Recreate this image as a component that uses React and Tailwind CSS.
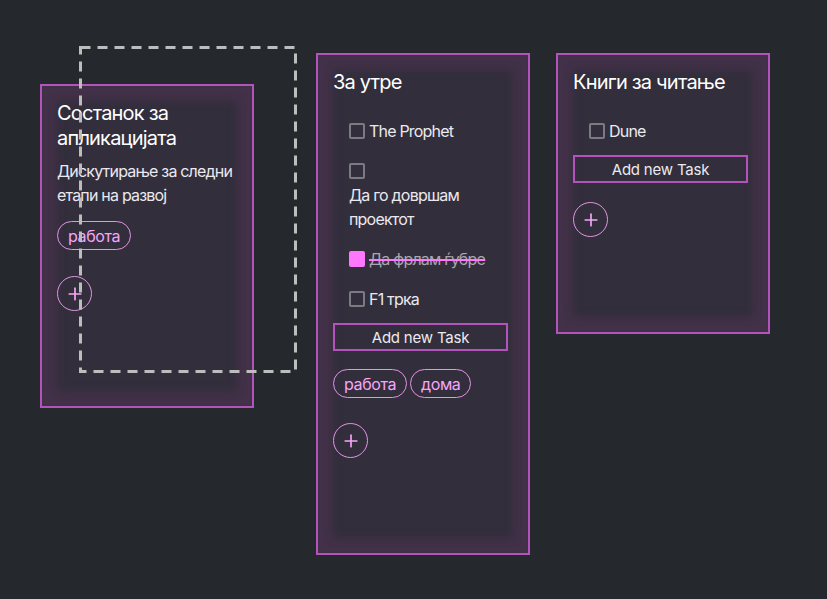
import { Plus } from 'lucide-react'

const BOARD = [
  {
    id: 'c2',
    title: 'За утре',
    tasks: [
      { text: 'The Prophet', done: false },
      { text: 'Да го довршам проектот', done: false },
      { text: 'Да фрлам ѓубре', done: true },
      { text: 'F1 трка', done: false },
    ],
    tags: ['работа', 'дома'],
  },
  {
    id: 'c3',
    title: 'Книги за читање',
    tasks: [{ text: 'Dune', done: false }],
    tags: [],
  },
]

const cardCls =
  'w-[214px] border-2 border-[#b553bd] bg-[#322e3c] px-[15px] pt-[15px] pb-[95px] shadow-[inset_0_0_8px_15px_#423148]'

function Checkbox({ done }) {
  if (done) return <span className="inline-block h-4 w-4 shrink-0 rounded-[2px] bg-[#ff77ff]" />
  return <span className="inline-block h-4 w-4 shrink-0 rounded-[2px] border-2 border-[#7d7b82]" />
}

function Task({ task }) {
  return (
    <li className="flex flex-wrap items-center gap-x-1 py-2 text-[16px] leading-6 tracking-[-0.8px]">
      <span className="flex h-6 items-center"><Checkbox done={task.done} /></span>
      <span
        className={
          task.done
            ? 'text-[#a9a6b0] line-through decoration-[#ff77ff] decoration-[1.5px]'
            : 'text-[#ebe9ee]'
        }
      >
        {task.text}
      </span>
    </li>
  )
}

function Tag({ label }) {
  return (
    <span className="inline-flex h-[29px] items-center rounded-full border border-[#e394e3] px-[10px] text-[16px] tracking-[-0.4px] text-[#f7a6f7]">
      {label}
    </span>
  )
}

function AddCircle({ className = '' }) {
  return (
    <button className={`flex h-[35px] w-[35px] items-center justify-center rounded-full border border-[#e394e3] text-[#f7a6f7] ${className}`}>
      <Plus size={20} strokeWidth={2} />
    </button>
  )
}

function Column({ col }) {
  return (
    <div className={`${cardCls} mt-[53px]`}>
      <h3 className="text-[20px] leading-[25px] tracking-[-0.8px] text-white">{col.title}</h3>
      <ul className="mt-[16px] pl-4">
        {col.tasks.map((t) => <Task key={t.text} task={t} />)}
      </ul>
      <button className="mt-1 h-7 w-[175px] border-2 border-[#b553bd] text-[15px] leading-none tracking-[-0.2px] text-[#ebe9ee]">
        Add new Task
      </button>
      {col.tags.length > 0 && (
        <div className="mt-[18px] flex gap-[3px]">
          {col.tags.map((t) => <Tag key={t} label={t} />)}
        </div>
      )}
      <AddCircle className={col.tags.length ? 'mt-[25px]' : 'mt-[19px]'} />
    </div>
  )
}

export default function App() {
  return (
    <div className="relative min-h-[599px] w-full bg-[#25292d] font-['Inter',sans-serif]">
      {/* card being dragged */}
      <div className={`${cardCls} absolute left-[40px] top-[84px]`}>
        <h3 className="text-[20px] leading-[25px] tracking-[-0.8px] text-white">Состанок за апликацијата</h3>
        <p className="mt-2 text-[16px] leading-6 tracking-[-0.8px] text-[#ebe9ee]">Дискутирање за следни етапи на развој</p>
        <div className="mt-[14px] flex">
          <Tag label="работа" />
        </div>
        <AddCircle className="mt-[26px]" />
      </div>

      <div className="flex items-start">
        {/* drop placeholder */}
        <div className="relative z-10 ml-[79px] mt-[46px] h-[327px] w-[218px]">
          <svg className="absolute inset-0" width="218" height="327">
            <rect x="1.5" y="1.5" width="215" height="324" fill="none" stroke="#bdbdbd" strokeWidth="3" strokeDasharray="10 7" />
          </svg>
        </div>
        <div className="ml-[19px]">
          <Column col={BOARD[0]} />
        </div>
        <div className="ml-[26px]">
          <Column col={BOARD[1]} />
        </div>
      </div>
    </div>
  )
}
